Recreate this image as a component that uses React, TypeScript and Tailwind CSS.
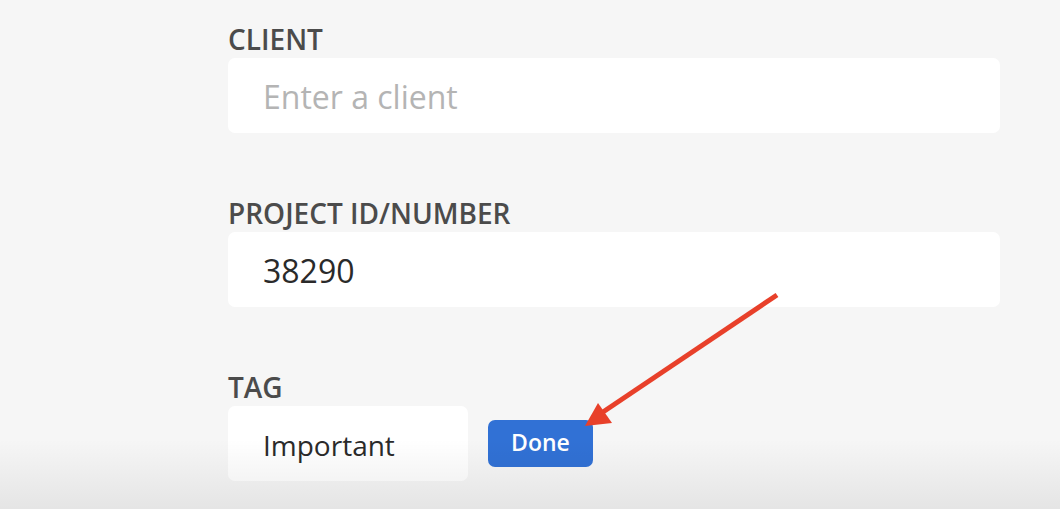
type FieldProps = {
  label: string;
  value?: string;
  placeholder?: string;
  width: string;
  text: string;
  children?: React.ReactNode;
};

function Field({ label, value, placeholder, width, text, children }: FieldProps) {
  return (
    <div className="mb-[65px]">
      <label className="block h-[30px] text-[28px] leading-[30px] font-semibold text-[#4b4b4b] mb-[4px]">
        {label}
      </label>
      <div className="flex items-center gap-[20px]">
        <input
          readOnly
          value={value ?? ""}
          placeholder={placeholder}
          className={`${width} ${text} h-[75px] rounded-[7px] bg-white pl-[35px] pt-[2px] font-normal text-[#2a2a2a] placeholder:text-[#b4b4b4] outline-none`}
        />
        {children}
      </div>
    </div>
  );
}

export default function App() {
  return (
    <div className="relative w-full h-[509px] overflow-hidden bg-[#f6f6f6] font-['Open_Sans',sans-serif]">
      <div className="pl-[228px] pt-[24px]">
        <Field label="CLIENT" placeholder="Enter a client" width="w-[772px]" text="text-[32px]" />
        <Field label="PROJECT ID/NUMBER" value="38290" width="w-[772px]" text="text-[32px]" />
        <Field label="TAG" value="Important" width="w-[240px]" text="text-[28px]">
          <button className="w-[105px] h-[47px] rounded-[7px] bg-[#3171d5] text-white text-[23px] font-semibold pb-[2px]">
            Done
          </button>
        </Field>
      </div>

      {/* annotation arrow */}
      <svg className="absolute left-0 top-0 pointer-events-none" width="1060" height="509">
        <line x1="777" y1="295" x2="600" y2="414" stroke="#e8402a" strokeWidth="5" />
        <polygon points="585,426 598,403 612,423" fill="#e8402a" />
      </svg>

      {/* bottom shade */}
      <div className="absolute left-0 right-0 bottom-0 h-[70px] bg-gradient-to-b from-transparent to-[rgba(0,0,0,0.07)] pointer-events-none" />
    </div>
  );
}
